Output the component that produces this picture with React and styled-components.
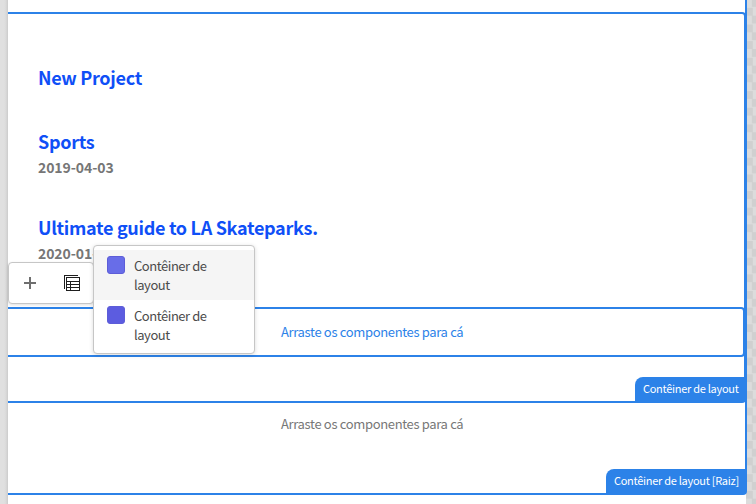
import React from "react";
import styled, { createGlobalStyle } from "styled-components";

const Global = createGlobalStyle`
  * { box-sizing: border-box; }
  body { margin: 0; overflow: hidden; font-family: "Noto Sans CJK SC", "Noto Sans", sans-serif; }
  h2, p { margin: 0; }
`;

const Editor = styled.div`
  width: 756px;
  height: 504px;
  display: grid;
  grid-template-columns: 8px 738px 10px;
  position: relative;
  overflow: hidden;
  background: #fff;
`;

const Gutter = styled.div`
  background: linear-gradient(90deg, #e0e0e0 50%, #dadada 75%, #cbcbcb);
`;

const Checkerboard = styled.div`
  background: conic-gradient(#d0d0d0 25%, #dcdcdc 0 50%, #d0d0d0 0 75%, #dcdcdc 0) -2px -1px / 16.67px 16.67px;
`;

const RootFrame = styled.main`
  z-index: 1;
  width: 739px;
  height: 495px;
  border: solid #2c82e8;
  border-width: 0 2px 2px 0;
  border-bottom-right-radius: 4px;
  padding-top: 12px;
  display: flex;
  flex-direction: column;
`;

const LayoutFrame = styled.section`
  height: 391px;
  margin-right: -1px;
  border: solid #2c82e8;
  border-width: 2px 2px 2px 0;
  border-radius: 0 4px 4px 0;
  display: flex;
  flex-direction: column;
`;

const Articles = styled.div`
  height: 293px;
  padding: 49px 0 0 30px;
  white-space: nowrap;
`;

const Article = styled.article`
  height: ${(p) => p.$height}px;
`;

const Title = styled.h2`
  font-size: 18px;
  line-height: 28px;
  font-weight: 700;
  letter-spacing: -0.3px;
  color: #0f4ff7;
`;

const DateText = styled.p`
  font-size: 14px;
  line-height: 24px;
  font-weight: 700;
  letter-spacing: -0.08px;
  color: #767676;
`;

const DropZone = styled.div`
  height: 50px;
  flex: none;
  margin-right: -1px;
  border: 2px solid ${(p) => (p.$active ? "#2c82e8" : "transparent")};
  border-left: 0;
  border-radius: 0 4px 4px 0;
  padding-left: 273px;
  font-size: 13px;
  letter-spacing: -0.34px;
  line-height: ${(p) => (p.$active ? 46 : 38)}px;
  color: ${(p) => (p.$active ? "#2c82e8" : "#777")};
  white-space: nowrap;
`;

const FrameLabel = styled.div`
  height: 24px;
  width: ${(p) => p.$width}px;
  margin-top: auto;
  align-self: flex-end;
  flex: none;
  padding-left: 8px;
  border-top-left-radius: 8px;
  background: #2c82e8;
  color: #fff;
  font-size: 11px;
  letter-spacing: -0.28px;
  line-height: 22px;
  white-space: nowrap;
`;

const Toolbar = styled.div`
  z-index: 2;
  position: absolute;
  left: 8px;
  top: 262px;
  width: 86px;
  height: 42px;
  display: flex;
  align-items: center;
  gap: 23px;
  padding-left: 13px;
  border: 1px solid #c6c6c6;
  border-radius: 4px;
  background: #fff;
  box-shadow: 0 1px 3px rgba(0, 0, 0, 0.12);
`;

const ToolButton = styled.button`
  display: flex;
  padding: 0;
  border: 0;
  background: none;
`;

const Menu = styled.ul`
  z-index: 3;
  position: absolute;
  left: 93px;
  top: 245px;
  width: 162px;
  height: 109px;
  margin: 0;
  padding: 4px 0;
  list-style: none;
  border: 1px solid #c6c6c6;
  border-radius: 4px;
  background: #fff;
  box-shadow: 0 1px 4px rgba(0, 0, 0, 0.15);
`;

const MenuItem = styled.li`
  height: 50px;
  display: flex;
  gap: 9px;
  padding: 6px 13px;
  background: ${(p) => (p.$hover ? "#f5f5f5" : "#fff")};
`;

const Swatch = styled.span`
  width: 18px;
  height: 18px;
  flex: none;
  border: 1px solid #5d5dd8;
  border-radius: 3px;
  background: ${(p) => p.$color};
`;

const MenuText = styled.span`
  width: 95px;
  font-size: 13px;
  letter-spacing: -0.45px;
  line-height: 18.5px;
  margin-top: 1px;
  color: #4b4b4b;
`;

const AddIcon = () => (
  <svg width="18" height="18" viewBox="0 0 18 18" fill="none" stroke="#6e6e6e" strokeWidth="2">
    <path d="M2 9h12M8 3v12" />
  </svg>
);

const ListIcon = () => (
  <svg width="18" height="18" viewBox="0 0 18 18" fill="none" stroke="#1e1e1e" shapeRendering="crispEdges">
    <path d="M1.5 15V1.5H15M3.5 3.5h13v13h-13zM3 7.5h13M3 10.5h13M3 13.5h13M7.5 7v10" />
  </svg>
);

export default function App() {
  return (
    <>
      <Global />
      <Editor>
        <Gutter />
        <RootFrame>
          <LayoutFrame>
            <Articles>
              <Article $height={64}><Title>New Project</Title></Article>
              <Article $height={86}><Title>Sports</Title><DateText>2019-04-03</DateText></Article>
              <Article $height={86}>
                <Title>Ultimate guide to LA Skateparks.</Title>
                <DateText>2020-01-16</DateText>
              </Article>
            </Articles>
            <DropZone $active>Arraste os componentes para cá</DropZone>
            <FrameLabel $width={109}>Contêiner de layout</FrameLabel>
          </LayoutFrame>
          <DropZone>Arraste os componentes para cá</DropZone>
          <FrameLabel $width={139}>Contêiner de layout [Raiz]</FrameLabel>
        </RootFrame>
        <Checkerboard />
        <Toolbar>
          <ToolButton aria-label="Adicionar"><AddIcon /></ToolButton>
          <ToolButton aria-label="Selecionar principal"><ListIcon /></ToolButton>
        </Toolbar>
        <Menu>
          <MenuItem $hover><Swatch $color="#686de8" /><MenuText>Contêiner de layout</MenuText></MenuItem>
          <MenuItem><Swatch $color="#5c5ce0" /><MenuText>Contêiner de layout</MenuText></MenuItem>
        </Menu>
      </Editor>
    </>
  );
}
